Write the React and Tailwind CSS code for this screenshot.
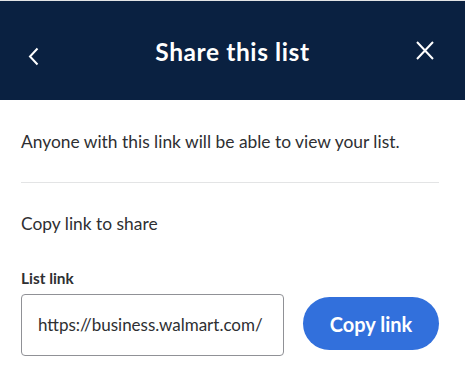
export default function App() {
  return (
    <div
      className="w-[465px] h-[375px] overflow-hidden bg-white border-t border-[#e3e4e5]"
      style={{ fontFamily: "Lato, 'Noto Sans', sans-serif" }}
    >
      <header className="relative flex h-[99px] items-center justify-between bg-[#0a2141] pl-[28px] pr-[31px] text-white">
        <button className="mt-[11px] flex items-center" aria-label="Back">
          <svg width="11" height="19" viewBox="0 0 11 19" fill="none">
            <path d="M9.5 1.5 2 9.5l7.5 8" stroke="white" strokeWidth="2" />
          </svg>
        </button>
        <h1 className="pointer-events-none absolute left-0 right-0 mt-[3px] text-center text-[24.5px] font-bold tracking-[0.6px]">
          Share this list
        </h1>
        <button className="flex items-center" aria-label="Close">
          <svg width="18" height="19" viewBox="0 0 18 19" fill="none">
            <path d="M1 1l16 17M17 1 1 18" stroke="white" strokeWidth="2" />
          </svg>
        </button>
      </header>

      <main className="pl-[21px] pr-[26px] text-[#2e2f32]">
        <p className="pt-[30px] text-[17.4px] leading-6">
          Anyone with this link will be able to view your list.
        </p>
        <hr className="mt-[28px] border-[#e3e4e5]" />
        <p className="mt-[29px] text-[17.4px] leading-6">Copy link to share</p>

        <label className="mt-[32px] block text-[15.4px] font-bold leading-5">List link</label>
        <div className="mt-[6px] flex items-start justify-between">
          <div className="flex h-[62px] w-[263px] items-center overflow-hidden rounded border border-[#909196] pl-[16px] pr-[20px]">
            <span className="overflow-hidden whitespace-nowrap text-[17px]">
              https://business.walmart.com/lists/share/8f2a
            </span>
          </div>
          <button className="mt-[3px] h-[53px] w-[136px] rounded-full bg-[#3270dc] text-[20px] font-bold text-white">
            Copy link
          </button>
        </div>
      </main>
    </div>
  );
}
